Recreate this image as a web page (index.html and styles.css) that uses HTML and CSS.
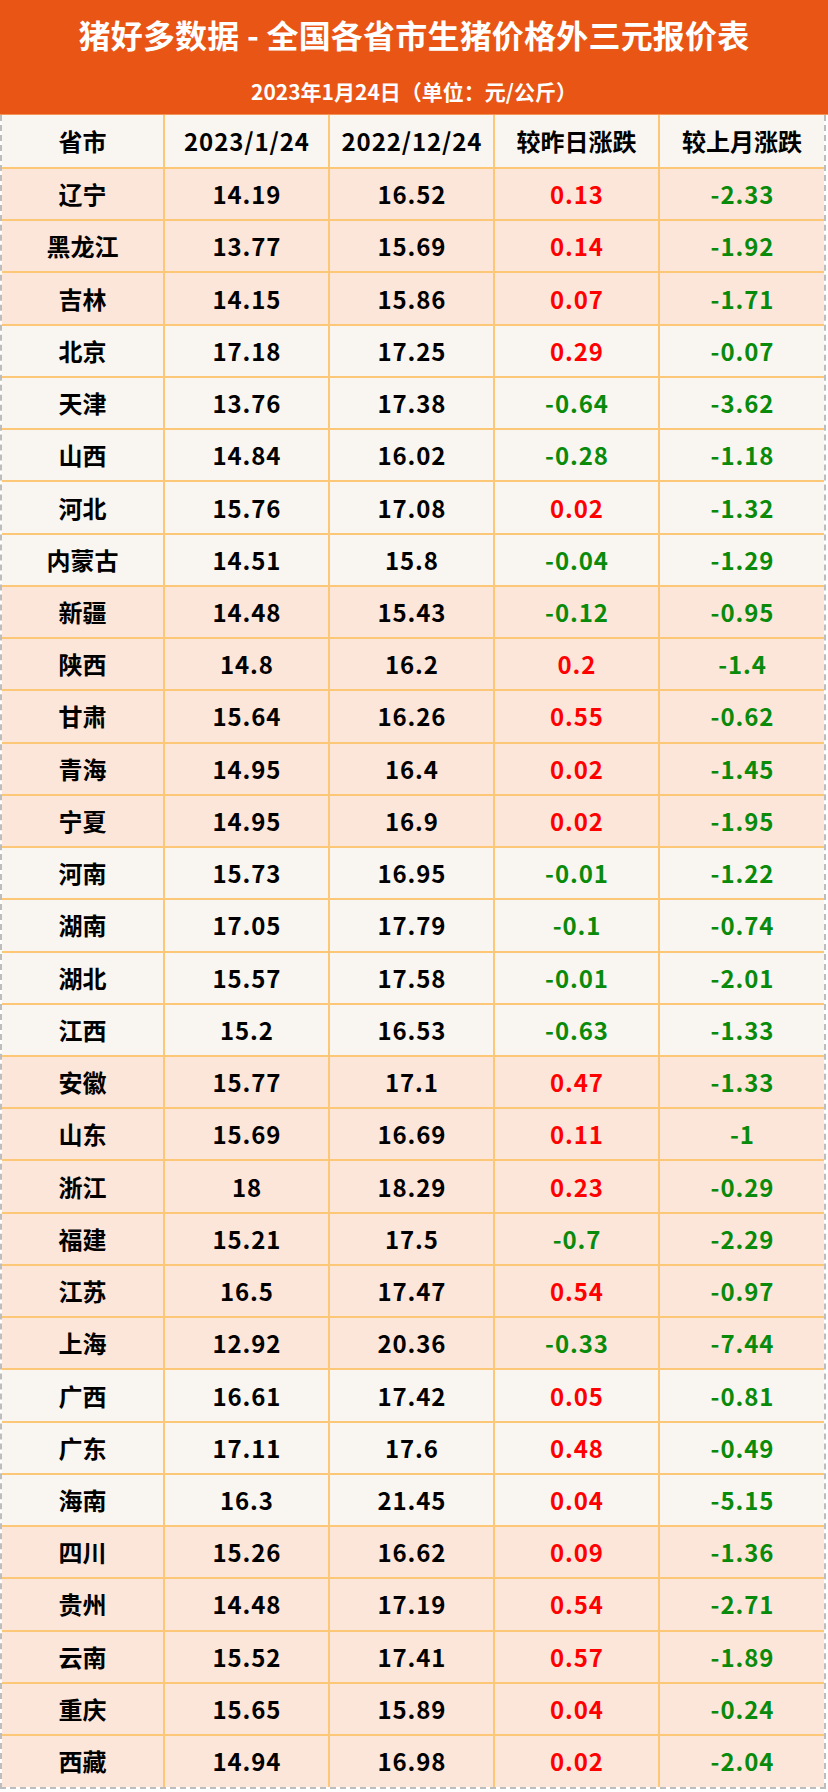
FILE: index.html
```html
<!DOCTYPE html>
<html lang="zh-CN">
<head>
<meta charset="utf-8">
<title>猪好多数据</title>
<link rel="stylesheet" href="styles.css">
</head>
<body>
<div class="page">
  <header class="banner">
    <h1 class="title">猪好多数据 - 全国各省市生猪价格外三元报价表</h1>
    <p class="subtitle">2023年1月24日（单位：元/公斤）</p>
  </header>
  <div class="table">
    <div class="row head"><div class="cell">省市</div><div class="cell num">2023/1/24</div><div class="cell num">2022/12/24</div><div class="cell">较昨日涨跌</div><div class="cell">较上月涨跌</div></div>
    <div class="row pink"><div class="cell">辽宁</div><div class="cell">14.19</div><div class="cell">16.52</div><div class="cell up">0.13</div><div class="cell down">-2.33</div></div>
    <div class="row pink"><div class="cell">黑龙江</div><div class="cell">13.77</div><div class="cell">15.69</div><div class="cell up">0.14</div><div class="cell down">-1.92</div></div>
    <div class="row pink"><div class="cell">吉林</div><div class="cell">14.15</div><div class="cell">15.86</div><div class="cell up">0.07</div><div class="cell down">-1.71</div></div>
    <div class="row light"><div class="cell">北京</div><div class="cell">17.18</div><div class="cell">17.25</div><div class="cell up">0.29</div><div class="cell down">-0.07</div></div>
    <div class="row light"><div class="cell">天津</div><div class="cell">13.76</div><div class="cell">17.38</div><div class="cell down">-0.64</div><div class="cell down">-3.62</div></div>
    <div class="row light"><div class="cell">山西</div><div class="cell">14.84</div><div class="cell">16.02</div><div class="cell down">-0.28</div><div class="cell down">-1.18</div></div>
    <div class="row light"><div class="cell">河北</div><div class="cell">15.76</div><div class="cell">17.08</div><div class="cell up">0.02</div><div class="cell down">-1.32</div></div>
    <div class="row light"><div class="cell">内蒙古</div><div class="cell">14.51</div><div class="cell">15.8</div><div class="cell down">-0.04</div><div class="cell down">-1.29</div></div>
    <div class="row pink"><div class="cell">新疆</div><div class="cell">14.48</div><div class="cell">15.43</div><div class="cell down">-0.12</div><div class="cell down">-0.95</div></div>
    <div class="row pink"><div class="cell">陕西</div><div class="cell">14.8</div><div class="cell">16.2</div><div class="cell up">0.2</div><div class="cell down">-1.4</div></div>
    <div class="row pink"><div class="cell">甘肃</div><div class="cell">15.64</div><div class="cell">16.26</div><div class="cell up">0.55</div><div class="cell down">-0.62</div></div>
    <div class="row pink"><div class="cell">青海</div><div class="cell">14.95</div><div class="cell">16.4</div><div class="cell up">0.02</div><div class="cell down">-1.45</div></div>
    <div class="row pink"><div class="cell">宁夏</div><div class="cell">14.95</div><div class="cell">16.9</div><div class="cell up">0.02</div><div class="cell down">-1.95</div></div>
    <div class="row light"><div class="cell">河南</div><div class="cell">15.73</div><div class="cell">16.95</div><div class="cell down">-0.01</div><div class="cell down">-1.22</div></div>
    <div class="row light"><div class="cell">湖南</div><div class="cell">17.05</div><div class="cell">17.79</div><div class="cell down">-0.1</div><div class="cell down">-0.74</div></div>
    <div class="row light"><div class="cell">湖北</div><div class="cell">15.57</div><div class="cell">17.58</div><div class="cell down">-0.01</div><div class="cell down">-2.01</div></div>
    <div class="row light"><div class="cell">江西</div><div class="cell">15.2</div><div class="cell">16.53</div><div class="cell down">-0.63</div><div class="cell down">-1.33</div></div>
    <div class="row pink"><div class="cell">安徽</div><div class="cell">15.77</div><div class="cell">17.1</div><div class="cell up">0.47</div><div class="cell down">-1.33</div></div>
    <div class="row pink"><div class="cell">山东</div><div class="cell">15.69</div><div class="cell">16.69</div><div class="cell up">0.11</div><div class="cell down">-1</div></div>
    <div class="row pink"><div class="cell">浙江</div><div class="cell">18</div><div class="cell">18.29</div><div class="cell up">0.23</div><div class="cell down">-0.29</div></div>
    <div class="row pink"><div class="cell">福建</div><div class="cell">15.21</div><div class="cell">17.5</div><div class="cell down">-0.7</div><div class="cell down">-2.29</div></div>
    <div class="row pink"><div class="cell">江苏</div><div class="cell">16.5</div><div class="cell">17.47</div><div class="cell up">0.54</div><div class="cell down">-0.97</div></div>
    <div class="row pink"><div class="cell">上海</div><div class="cell">12.92</div><div class="cell">20.36</div><div class="cell down">-0.33</div><div class="cell down">-7.44</div></div>
    <div class="row light"><div class="cell">广西</div><div class="cell">16.61</div><div class="cell">17.42</div><div class="cell up">0.05</div><div class="cell down">-0.81</div></div>
    <div class="row light"><div class="cell">广东</div><div class="cell">17.11</div><div class="cell">17.6</div><div class="cell up">0.48</div><div class="cell down">-0.49</div></div>
    <div class="row light"><div class="cell">海南</div><div class="cell">16.3</div><div class="cell">21.45</div><div class="cell up">0.04</div><div class="cell down">-5.15</div></div>
    <div class="row pink"><div class="cell">四川</div><div class="cell">15.26</div><div class="cell">16.62</div><div class="cell up">0.09</div><div class="cell down">-1.36</div></div>
    <div class="row pink"><div class="cell">贵州</div><div class="cell">14.48</div><div class="cell">17.19</div><div class="cell up">0.54</div><div class="cell down">-2.71</div></div>
    <div class="row pink"><div class="cell">云南</div><div class="cell">15.52</div><div class="cell">17.41</div><div class="cell up">0.57</div><div class="cell down">-1.89</div></div>
    <div class="row pink"><div class="cell">重庆</div><div class="cell">15.65</div><div class="cell">15.89</div><div class="cell up">0.04</div><div class="cell down">-0.24</div></div>
    <div class="row pink last"><div class="cell">西藏</div><div class="cell">14.94</div><div class="cell">16.98</div><div class="cell up">0.02</div><div class="cell down">-2.04</div></div>
  </div>
</div>
</body>
</html>
```

FILE: styles.css
```css
html, body {
  margin: 0;
  padding: 0;
  background: #ffffff;
}
body {
  font-family: "Noto Sans CJK SC", "Microsoft YaHei", "Noto Sans", sans-serif;
  font-weight: 700;
  color: #000;
}
.page {
  width: 828px;
  height: 1792px;
  overflow: hidden;
}
.banner {
  background: #e95514;
  height: 115px;
  padding-top: 14px;
  box-sizing: border-box;
  text-align: center;
  color: #ffffff;
  border-bottom: 1px solid #f29357;
}
.title {
  margin: 0;
  font-size: 32px;
  line-height: 40px;
  font-weight: 700;
  letter-spacing: 0.2px;
}
.subtitle {
  margin: 24px 0 0;
  font-size: 21px;
  line-height: 26px;
  font-weight: 700;
}
.table {
  width: 826px;
  border-left: 2px dashed #bdbdbd;
  border-right: 2px dashed #bdbdbd;
  border-bottom: 2px dashed #bdbdbd;
  box-sizing: border-box;
}
.row {
  display: grid;
  grid-template-columns: 163px 165px 165px 165px 1fr;
  height: 52.24px;
  border-bottom: 2px solid #fcc878;
  box-sizing: border-box;
}
.row.head {
  height: 54px;
  background: #f9f6f1;
}
.row.last {
  border-bottom: none;
  height: 50.5px;
}
.row.pink { background: #fce6da; }
.row.light { background: #f9f6f1; }
.cell {
  display: flex;
  align-items: center;
  justify-content: center;
  font-size: 24px;
  line-height: 1;
  border-right: 2px solid #fcc878;
}
.cell:last-child {
  border-right: none;
}
.row:not(.head) .cell + .cell,
.cell.num {
  letter-spacing: 0.9px;
  text-indent: 0.9px;
}
.up { color: #ff0000; }
.down { color: #0a8a0a; }
```
